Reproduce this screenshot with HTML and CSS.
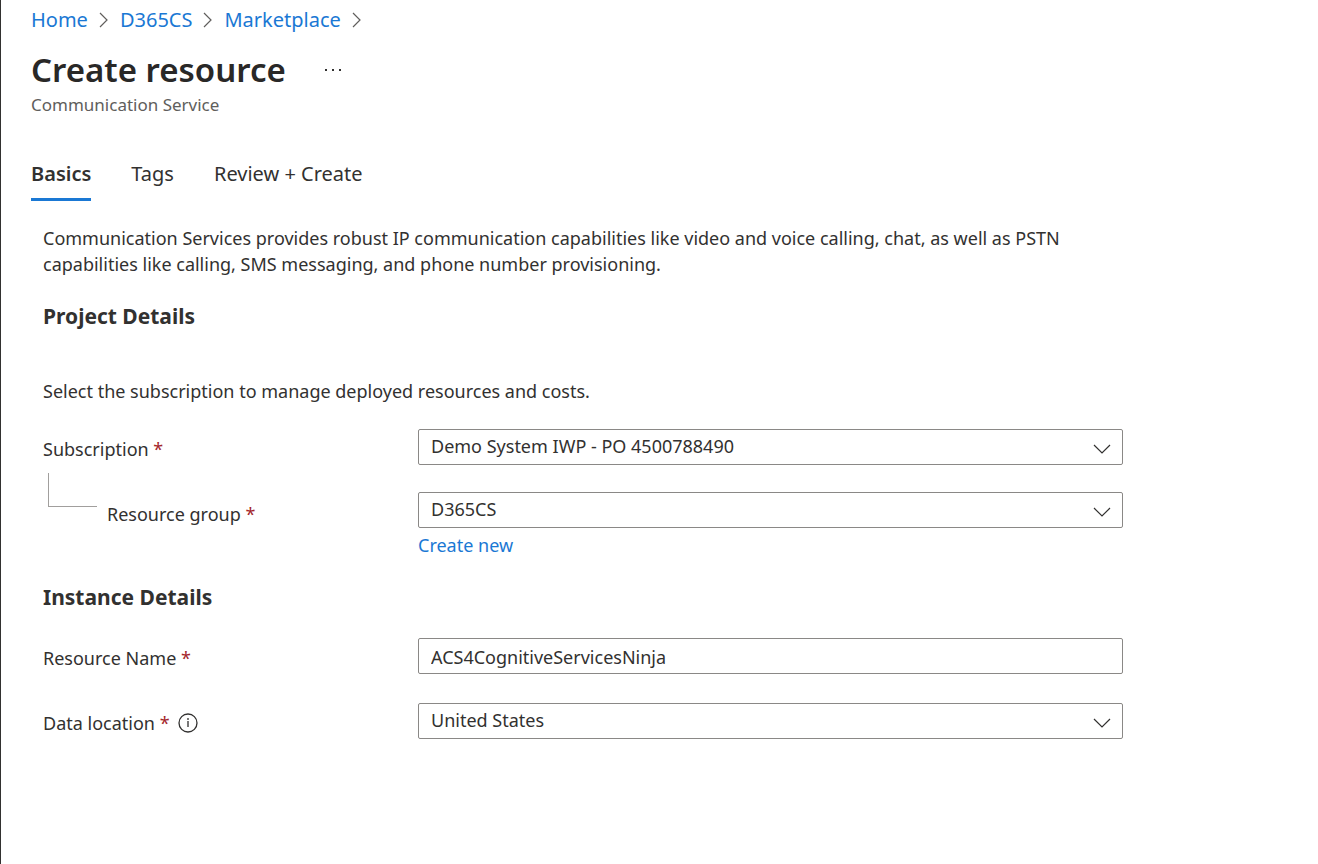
FILE: index.html
```html
<!DOCTYPE html>
<html lang="en">
<head>
<meta charset="utf-8">
<meta name="viewport" content="width=device-width, initial-scale=1">
<title>Create resource</title>
<link rel="stylesheet" href="styles.css">
</head>
<body>
<main class="page">
  <nav class="breadcrumb" aria-label="Breadcrumb">
    <a href="#">Home</a>
    <svg class="crumb-arrow" viewBox="0 0 10 16"><path d="M1 1l7 7-7 7"/></svg>
    <a href="#">D365CS</a>
    <svg class="crumb-arrow" viewBox="0 0 10 16"><path d="M1 1l7 7-7 7"/></svg>
    <a href="#">Marketplace</a>
    <svg class="crumb-arrow" viewBox="0 0 10 16"><path d="M1 1l7 7-7 7"/></svg>
  </nav>
  <header class="heading">
    <div class="title-row">
      <h1>Create resource</h1>
      <button class="more" type="button" aria-label="More"><svg viewBox="0 0 18 4"><path d="M1 1h2v2H1zM8 1h2v2H8zM15 1h2v2h-2z"/></svg></button>
    </div>
    <p class="subtitle">Communication Service</p>
  </header>
  <div class="tabs" role="tablist">
    <button class="tab tab-active" role="tab" aria-selected="true" type="button">Basics</button>
    <button class="tab" role="tab" aria-selected="false" type="button">Tags</button>
    <button class="tab" role="tab" aria-selected="false" type="button">Review + Create</button>
  </div>
  <form class="form">
    <p class="intro">Communication Services provides robust IP communication capabilities like video and voice calling, chat, as well as PSTN capabilities like calling, SMS messaging, and phone number provisioning.</p>
    <h2>Project Details</h2>
    <p class="hint">Select the subscription to manage deployed resources and costs.</p>
    <div class="row row-first">
      <label for="subscription">Subscription <span class="required">*</span></label>
      <div class="field">
        <select id="subscription"><option>Demo System IWP - PO 4500788490</option></select>
        <svg class="chevron" viewBox="0 0 18 10"><path d="M1 1l8 8 8-8"/></svg>
      </div>
    </div>
    <div class="row row-child">
      <div class="child-label">
        <span class="branch"></span>
        <label for="group">Resource group <span class="required">*</span></label>
      </div>
      <div class="stack">
        <div class="field">
          <select id="group"><option>D365CS</option></select>
          <svg class="chevron" viewBox="0 0 18 10"><path d="M1 1l8 8 8-8"/></svg>
        </div>
        <a href="#">Create new</a>
      </div>
    </div>
    <h2>Instance Details</h2>
    <div class="row row-name">
      <label for="name">Resource Name <span class="required">*</span></label>
      <div class="field"><input id="name" type="text" value="ACS4CognitiveServicesNinja"></div>
    </div>
    <div class="row row-location">
      <div class="label-info">
        <label for="location">Data location <span class="required">*</span></label>
        <svg class="info" viewBox="0 0 20 20"><circle cx="10" cy="10" r="9"/><path d="M10 8v6M10 5v2"/></svg>
      </div>
      <div class="field">
        <select id="location"><option>United States</option></select>
        <svg class="chevron" viewBox="0 0 18 10"><path d="M1 1l8 8 8-8"/></svg>
      </div>
    </div>
  </form>
</main>
</body>
</html>
```
FILE: styles.css
```css
* { box-sizing: border-box; }
body { margin: 0; background: #fff; color: #323130; font: 18px/26px "Segoe UI", "Noto Sans", sans-serif; }
h1, h2, p { margin: 0; }
a { color: #1a78d4; text-decoration: none; }
svg { display: block; fill: none; stroke: #323130; flex: none; }
button, input, select { font: inherit; color: inherit; }
.page { min-height: 100vh; border-left: 1px solid #323130; padding: 7px 30px 24px; }
.breadcrumb { display: flex; align-items: center; gap: 11px; font-size: 20px; }
.crumb-arrow { width: 10px; height: 16px; stroke: #605e5c; stroke-width: 1.2; }
.heading { padding-top: 14px; }
.title-row { display: flex; align-items: center; gap: 38px; }
h1 { font-size: 33px; line-height: 46px; font-weight: 600; color: #292827; }
.more { padding: 4px 0; border: 0; background: none; }
.more svg { width: 18px; height: 4px; fill: #323130; stroke: none; }
.subtitle { font-size: 17px; line-height: 24px; color: #605e5c; }
.tabs { display: flex; gap: 40px; margin-top: 44px; }
.tab { padding: 0 0 11px; border: 0; border-bottom: 3px solid transparent; background: none; font-size: 20px; white-space: nowrap; }
.tab-active { font-weight: 600; border-color: #1a78d4; }
.form { padding: 24px 0 0 12px; max-width: 1092px; }
.intro { max-width: 1040px; }
h2 { font-size: 21px; line-height: 30px; font-weight: 700; margin-top: 24px; }
.hint { margin-top: 47px; }
.row { display: grid; grid-template-columns: 375px minmax(0, 1fr); align-items: center; }
.row label { padding-top: 4px; }
.row-first { margin-top: 25px; }
.row-child { margin-top: 27px; align-items: start; }
.row-name { margin-top: 26px; }
.row-location { margin-top: 29px; }
.field { display: grid; align-items: center; }
.field > * { grid-area: 1 / 1; }
.field select, .field input { width: 100%; height: 36px; appearance: none; border: 1px solid #8a8886; border-radius: 2px; background: #fff; padding: 0 12px; }
.field select { padding-bottom: 2px; }
.field input { padding-top: 2px; }
.chevron { width: 18px; height: 10px; justify-self: end; margin: 4px 12px 0 0; stroke-width: 1.2; pointer-events: none; }
.required { color: #a4262c; }
.child-label { display: flex; gap: 10px; padding-left: 5px; }
.child-label label { padding-top: 9px; }
.branch { width: 49px; height: 34px; margin-top: -19px; border: solid #a19f9d; border-width: 0 0 1px 1px; }
.stack { display: grid; justify-items: start; gap: 4px; }
.stack .field { width: 100%; }
.label-info { display: flex; align-items: center; gap: 8px; }
.info { width: 20px; height: 20px; margin-top: 4px; stroke-width: 1.3; }
```
